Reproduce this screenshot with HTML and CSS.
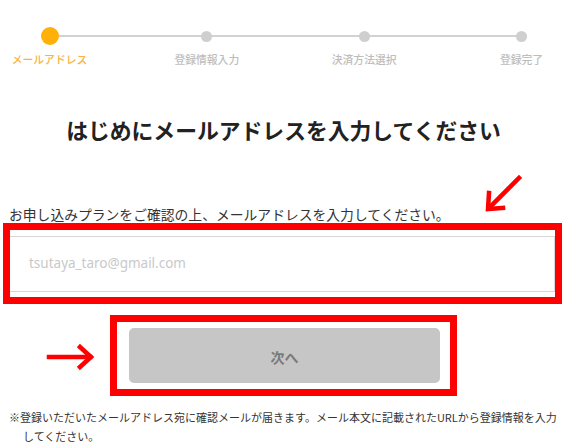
FILE: index.html
```html
<!DOCTYPE html>
<html lang="ja">
<head>
<meta charset="utf-8">
<title>メールアドレス入力</title>
<link rel="stylesheet" href="styles.css">
</head>
<body>
<div class="page">
  <ol class="steps">
    <li class="step is-active"><span class="dot-wrap"><span class="dot"></span></span><span class="step-label">メールアドレス</span></li>
    <li class="step"><span class="dot-wrap"><span class="dot"></span></span><span class="step-label">登録情報入力</span></li>
    <li class="step"><span class="dot-wrap"><span class="dot"></span></span><span class="step-label">決済方法選択</span></li>
    <li class="step"><span class="dot-wrap"><span class="dot"></span></span><span class="step-label">登録完了</span></li>
  </ol>

  <h1 class="title">はじめにメールアドレスを入力してください</h1>

  <p class="lead">お申し込みプランをご確認の上、メールアドレスを入力してください。</p>

  <div class="frame frame-input">
    <input class="email" type="email" placeholder="tsutaya_taro@gmail.com">
  </div>

  <div class="frame frame-button">
    <button class="next" type="button">次へ</button>
  </div>

  <p class="note">※登録いただいたメールアドレス宛に確認メールが届きます。メール本文に記載されたURLから登録情報を入力してください。</p>

  <svg class="arrows" width="562" height="447" viewBox="0 0 562 447" aria-hidden="true">
    <g stroke="#ff0000" stroke-width="4.5" fill="none" stroke-linecap="square" stroke-linejoin="miter">
      <line x1="519" y1="178" x2="490" y2="207"/>
      <polyline points="489,193 488,209 503,208"/>
      <line x1="49" y1="357" x2="90" y2="357"/>
      <polyline points="80,347 91,357 80,367"/>
    </g>
  </svg>
</div>
</body>
</html>
```

FILE: styles.css
```css
* { box-sizing: border-box; }

html, body {
  margin: 0;
  padding: 0;
  background: #fff;
}

body {
  font-family: "Noto Sans CJK JP", "Noto Sans", sans-serif;
  color: #333;
}

.page {
  position: relative;
  width: 562px;
  height: 447px;
  padding: 27px 6px 0 9px;
  overflow: hidden;
}

/* stepper */
.steps {
  position: relative;
  list-style: none;
  margin: 0 -3px 0 3px;
  padding: 0;
  display: flex;
  justify-content: space-between;
}

.steps::before {
  content: "";
  position: absolute;
  left: 37.5px;
  right: 37.5px;
  top: 8px;
  height: 2px;
  background: #d2d2d2;
}

.step {
  position: relative;
  width: 75px;
  display: flex;
  flex-direction: column;
  align-items: center;
}

.dot-wrap {
  height: 18px;
  display: flex;
  align-items: center;
  justify-content: center;
}

.dot {
  width: 11px;
  height: 11px;
  border-radius: 50%;
  background: #cfcfcf;
}

.step-label {
  margin-top: 7px;
  font-size: 10.8px;
  line-height: 15px;
  color: #bdbdbd;
  white-space: nowrap;
  font-weight: 500;
}

.is-active .dot {
  width: 18px;
  height: 18px;
  background: #ffb10a;
}

.is-active .step-label {
  color: #f9b244;
}

/* heading */
.title {
  margin: 48px 0 0;
  font-size: 21.8px;
  line-height: 30px;
  font-weight: 700;
  color: #222;
  text-align: center;
  padding-left: 2px;
}

.lead {
  margin: 60px 0 0;
  font-size: 13.8px;
  line-height: 18px;
  color: #333;
}

/* annotation frames */
.frame {
  border: 7px solid #ff0000;
}

.frame-input {
  margin: 0 -6px 0 -6px;
  padding: 6px 0 5px;
}

.email {
  display: block;
  width: 100%;
  height: 56px;
  margin: 0;
  padding: 0 0 2px 19px;
  border: 1px solid #d6d6d6;
  border-left: 0;
  background: #fff;
  font-family: "Noto Sans", sans-serif;
  font-size: 13.5px;
  color: #333;
  outline: none;
}

.email::placeholder {
  color: #c9c9c9;
}

.frame-button {
  width: 347px;
  margin: 11px auto 0;
  padding: 6px 10px 6px 12px;
  position: relative;
  left: 1px;
}

.next {
  display: block;
  width: 311px;
  height: 55px;
  margin: 0;
  border: 0;
  border-radius: 5px;
  background: #c6c6c6;
  color: #7a7a7a;
  font-family: "Noto Sans CJK JP", sans-serif;
  font-size: 14px;
  font-weight: 700;
  padding: 3px 0 0;
}

.note {
  margin: 12px -6px 0 0;
  padding-left: 14px;
  text-indent: -14px;
  font-size: 11px;
  line-height: 18.5px;
  color: #333;
}

.arrows {
  position: absolute;
  left: 0;
  top: 0;
  pointer-events: none;
}
```
